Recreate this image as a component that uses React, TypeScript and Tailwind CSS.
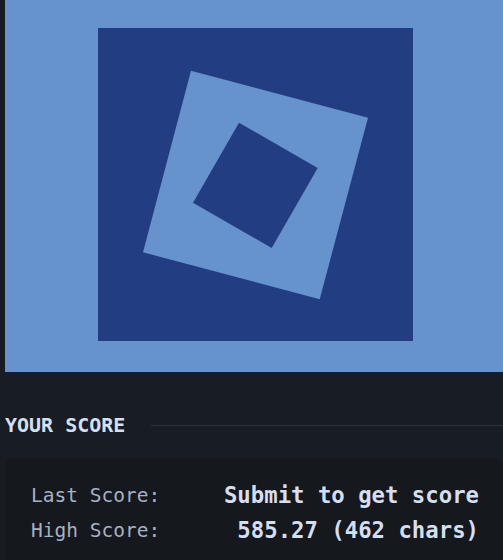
export default function App() {
    const mono = { fontFamily: '"DejaVu Sans Mono", "Liberation Mono", monospace' }

    return (
        <div className="h-[560px] w-[503px] overflow-hidden bg-[#181c23] pl-[5px]" style={mono}>
            <div className="h-[372px] w-[501px] bg-[#6692cd]">
                <svg width="501" height="372" viewBox="5 0 501 372">
                    <rect x="98" y="28" width="315" height="313" fill="#233d83" />
                    <polygon points="191,70.7 368,117.7 319.7,299.3 143,252.3" fill="#6692cd" />
                    <polygon points="239,122.7 317.7,168 271.7,248 193,202.7" fill="#233d83" />
                </svg>
            </div>

            <div className="mt-[39px] flex h-[28px] items-center gap-[26px]">
                <h2 className="text-[20px] font-bold text-[#d5dff0]">YOUR SCORE</h2>
                <div className="h-px flex-1 bg-[#2c313b]" />
            </div>

            <div className="mt-[20px] h-[120px] w-[498px] rounded-md bg-[#15181d] pl-[26px] pr-[24px] pt-[19px]">
                <div className="flex h-[35px] items-center justify-between">
                    <span className="text-[19.5px] text-[#a6b1c4]">Last Score:</span>
                    <span className="text-[22.3px] font-bold text-[#d5dff0]">Submit to get score</span>
                </div>
                <div className="flex h-[35px] items-center justify-between">
                    <span className="text-[19.5px] text-[#a6b1c4]">High Score:</span>
                    <span className="text-[22.3px] font-bold text-[#d5dff0]">585.27 (462 chars)</span>
                </div>
            </div>
        </div>
    )
}
